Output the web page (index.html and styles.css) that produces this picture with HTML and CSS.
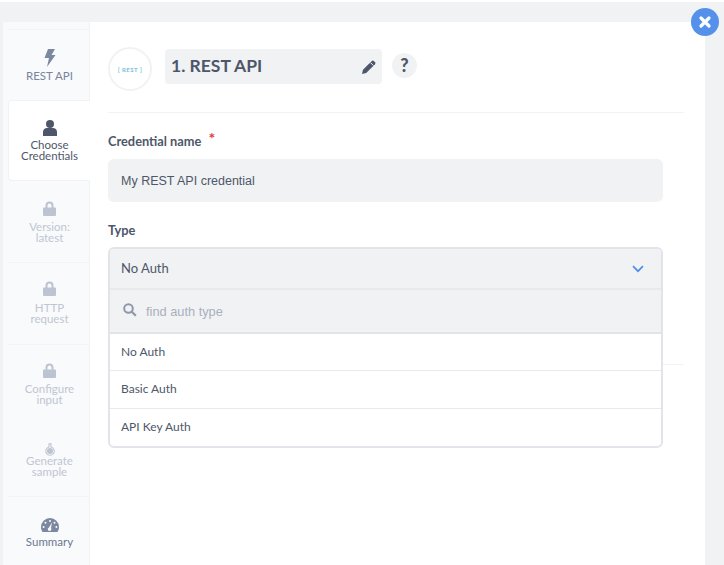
FILE: index.html
```html
<!DOCTYPE html>
<html lang="en">
<head>
    <meta charset="UTF-8">
    <title>REST API credential</title>
    <link rel="stylesheet" href="styles.css">
</head>
<body>

    <div class="modal">
        <div class="close">
            <svg width="14" height="14" viewBox="0 0 14 14"><path d="M3 3l8 8M11 3l-8 8" stroke="#fff" stroke-width="3.200" stroke-linecap="round"/></svg>
        </div>

        <div class="sidebar">
            <div class="step step-first">
                <svg class="step-icon" width="12" height="18" viewBox="0 0 12 18"><path class="dark" d="M4 0h7L7.500 6H11.500L3 18l2-9H0.500z"/></svg>
                <span>REST API</span>
            </div>
            <div class="step step-active">
                <svg class="step-icon" width="14" height="16" viewBox="0 0 14 16"><circle cx="7" cy="4" r="4" fill="#4d5769"/><path d="M0 16v-4c0-2.500 2-4 4-4h6c2 0 4 1.500 4 4v4z" fill="#4d5769"/></svg>
                <span>Choose<br>Credentials</span>
            </div>
            <div class="step step-locked step-version">
                <svg class="step-icon" width="13" height="15" viewBox="0 0 13 15"><path class="lock" d="M1 6.500h1.500V4.500a4 4 0 0 1 8 0v2H12a1 1 0 0 1 1 1V14a1 1 0 0 1-1 1H1a1 1 0 0 1-1-1V7.500a1 1 0 0 1 1-1zM4.500 6.500h4v-2a2 2 0 0 0-4 0z"/></svg>
                <span>Version:<br>latest</span>
            </div>
            <div class="step step-locked">
                <svg class="step-icon" width="13" height="15" viewBox="0 0 13 15"><path class="lock" d="M1 6.500h1.500V4.500a4 4 0 0 1 8 0v2H12a1 1 0 0 1 1 1V14a1 1 0 0 1-1 1H1a1 1 0 0 1-1-1V7.500a1 1 0 0 1 1-1zM4.500 6.500h4v-2a2 2 0 0 0-4 0z"/></svg>
                <span>HTTP<br>request</span>
            </div>
            <div class="step step-locked step-noline">
                <svg class="step-icon" width="13" height="15" viewBox="0 0 13 15"><path class="lock" d="M1 6.500h1.500V4.500a4 4 0 0 1 8 0v2H12a1 1 0 0 1 1 1V14a1 1 0 0 1-1 1H1a1 1 0 0 1-1-1V7.500a1 1 0 0 1 1-1zM4.500 6.500h4v-2a2 2 0 0 0-4 0z"/></svg>
                <span>Configure<br>input</span>
            </div>
            <div class="step step-locked step-sample">
                <svg class="step-icon" width="10" height="13" viewBox="0 0 10 13"><path d="M3.500 .7h3M4 .7v3.300a4.200 4.200 0 1 0 2 0V.7" fill="none" stroke="#bcc4d2" stroke-width="1.100"/><circle cx="5" cy="8" r="3" fill="#bcc4d2"/></svg>
                <span>Generate<br>sample</span>
            </div>
            <div class="step step-last">
                <svg class="step-icon" width="18" height="14" viewBox="0 0 18 14"><path class="dark" fill-rule="evenodd" d="M9 0a9 9 0 0 1 9 9c0 2-.6 3.500-1.500 5H1.500C.6 12.500 0 11 0 9a9 9 0 0 1 9-9zM9 2a1 1 0 1 0 0 2 1 1 0 0 0 0-2zM4.500 3.800a1 1 0 1 0 0 2 1 1 0 0 0 0-2zM13.500 3.800a1 1 0 1 0 0 2 1 1 0 0 0 0-2zM2.600 8a1 1 0 1 0 0 2 1 1 0 0 0 0-2zM15.400 8a1 1 0 1 0 0 2 1 1 0 0 0 0-2zM11 4.500L8 9.500a1.800 1.800 0 1 0 2 .6z"/></svg>
                <span>Summary</span>
            </div>
        </div>

        <div class="main">
            <div class="header">
                <div class="logo">
                    <span class="logo-text"><i>[</i> REST <i>]</i></span>
                </div>
                <div class="title">
                    <h2>1. REST API</h2>
                    <svg width="14" height="14" viewBox="0 0 14 14"><path d="M0 14l1-4.200L9.800 1a1.500 1.500 0 0 1 2 0L13 2.200a1.500 1.500 0 0 1 0 2L4.200 13z" fill="#4d5769"/><path d="M8.500 2.600l2.900 2.900" stroke="#f1f2f4" stroke-width="1"/></svg>
                </div>
                <div class="help">?</div>
            </div>

            <div class="form">
                <label class="label">Credential name <span class="req">*</span></label>
                <div class="input">My REST API credential</div>

                <label class="label label-type">Type</label>
                <div class="select-wrap">
                    <div class="dropdown">
                        <div class="selected">
                            <span>No Auth</span>
                            <svg width="12" height="8" viewBox="0 0 12 8"><path d="M1 1.200l5 5 5-5" fill="none" stroke="#4f8fe8" stroke-width="1.700"/></svg>
                        </div>
                        <div class="search">
                            <svg width="14" height="14" viewBox="0 0 14 14"><circle cx="5.500" cy="5.500" r="4.300" fill="none" stroke="#8f98a8" stroke-width="2"/><path d="M8.800 8.800l4 4" stroke="#8f98a8" stroke-width="2.200"/></svg>
                            <span>find auth type</span>
                        </div>
                        <div class="option">No Auth</div>
                        <div class="option">Basic Auth</div>
                        <div class="option">API Key Auth</div>
                    </div>
                </div>
            </div>
            <div class="form-line"></div>
        </div>
    </div>

</body>
</html>
```

FILE: styles.css
```css
html, body {
    height: 100%;
}
body {
    margin: 0;
    height: 565px;
    overflow: hidden;
    background-color: #fff;
    font-family: Lato, "Open Sans", sans-serif;
    color: #4d5769;
}
body::before {
    content: "";
    display: block;
    height: 2px;
}
.modal {
    position: relative;
    display: flex;
    height: 543px;
    margin-top: 20px;
    margin-left: 3px;
    margin-right: 19px;
    background-color: #fff;
    box-shadow: 0 0 0 30px #f1f2f4;
    clip-path: inset(-20px -19px 0 -3px);
}
.close {
    position: absolute;
    top: -14px;
    right: -14px;
    width: 28px;
    height: 28px;
    display: flex;
    align-items: center;
    justify-content: center;
    border-radius: 50%;
    background-color: #5591ea;
    z-index: 3;
}

/* steps on the left */
.sidebar {
    width: 87px;
    box-sizing: border-box;
    padding-left: 5px;
    background-color: #f9fafc;
    border-right: 1px solid #f1f2f5;
    flex-shrink: 0;
    padding-top: 7px;
}
.step {
    display: flex;
    flex-direction: column;
    align-items: center;
    height: 81px;
    box-sizing: border-box;
    border-bottom: 1px solid #f2f3f6;
    font-size: 11.500px;
    line-height: 11px;
    text-align: center;
    color: #bfc6d3;
    padding-top: 18px;
    padding-left: 2px;
}
.step-icon {
    margin-bottom: 6px;
}
.dark {
    fill: #7c88a0;
}
.lock {
    fill: #bcc4d2;
    fill-rule: evenodd;
}
.step-first {
    height: 71px;
    border-top: 1px solid #f2f3f6;
    border-bottom: none;
    color: #78849b;
    padding-top: 19px;
}
.step-first .step-icon,
.step-active .step-icon {
    margin-bottom: 3px;
}
.step-active {
    height: 81px;
    margin-right: -1px;
    background-color: #fff;
    border: 1px solid #f1f2f5;
    border-right: none;
    border-radius: 4px 0 0 4px;
    color: #4d5769;
    padding-top: 19px;
    padding-left: 0;
}
.step-locked {
    height: 82px;
}
.step-version {
    padding-top: 20px;
}
.step-version .step-icon {
    margin-bottom: 5px;
}
.step-noline {
    height: 71px;
    border-bottom: none;
}
.step-noline .step-icon {
    margin-bottom: 5px;
}
.step-sample {
    height: 81px;
    padding-top: 27px;
}
.step-sample .step-icon {
    margin-bottom: -1px;
}
.step-last {
    height: 68px;
    border-bottom: none;
    color: #6b7890;
    padding-top: 21px;
}
.step-last .step-icon {
    margin-bottom: 4px;
}

/* main panel */
.main {
    flex: 1;
    padding: 25px 21px 0 18px;
}
.header {
    display: flex;
    align-items: flex-start;
    height: 44px;
    padding-bottom: 21px;
    border-bottom: 1px solid #f1f2f4;
}
.logo {
    width: 44px;
    height: 44px;
    box-sizing: border-box;
    border: 2px solid #f1f2f4;
    border-radius: 50%;
    display: flex;
    align-items: center;
    justify-content: center;
    margin-right: 13px;
}
.logo-text {
    font-size: 6px;
    font-weight: 700;
    letter-spacing: 0.5px;
    color: #7cc0da;
}
.logo-text i {
    font-style: normal;
    color: #6fcfc5;
}
.title {
    width: 217px;
    height: 35px;
    margin-top: 2px;
    box-sizing: border-box;
    padding: 0 6px;
    display: flex;
    align-items: center;
    justify-content: space-between;
    border-radius: 4px;
    background-color: #f1f2f4;
    margin-right: 10px;
}
.title h2 {
    margin: 0 0 2px;
    font-size: 17.500px;
    font-weight: 700;
    color: #4d5769;
}
.help {
    width: 25px;
    height: 25px;
    margin-top: 6px;
    border-radius: 50%;
    background-color: #f1f2f4;
    text-align: center;
    font-size: 18px;
    font-weight: 900;
    line-height: 25px;
}
.form {
    width: 555px;
    padding-top: 19px;
}
.label {
    display: block;
    font-size: 12.800px;
    font-weight: 700;
    line-height: 18px;
    margin-bottom: 9px;
}
.req {
    color: #e8383d;
    font-size: 16px;
    line-height: 10px;
    position: relative;
    top: -2px;
    margin-left: 4px;
}
.input {
    height: 43px;
    box-sizing: border-box;
    padding-left: 13px;
    border-radius: 6px;
    background-color: #f1f2f4;
    font-family: "Liberation Sans", Arial, sans-serif;
    font-size: 12.500px;
    line-height: 44px;
}
.label-type {
    margin-top: 19px;
    margin-bottom: 8px;
}
.select-wrap {
    position: relative;
    height: 117px;
}
.dropdown {
    position: absolute;
    top: 0;
    left: 0;
    right: 0;
    z-index: 2;
    box-sizing: border-box;
    border: 2px solid #e2e4e9;
    border-radius: 6px;
    background-color: #fff;
    overflow: hidden;
}
.selected {
    height: 39px;
    display: flex;
    align-items: center;
    justify-content: space-between;
    padding: 0 17px 0 11px;
    background-color: #f1f2f4;
    border-bottom: 2px solid #e8e9ed;
    font-size: 13px;
}
.selected span {
    margin-bottom: 2px;
}
.search {
    height: 42px;
    display: flex;
    align-items: center;
    padding-left: 13px;
    background-color: #f1f2f4;
    border-bottom: 2px solid #e2e4e9;
    font-family: "Liberation Sans", Arial, sans-serif;
    font-size: 12.800px;
    color: #a8b0bd;
}
.search svg {
    margin-bottom: 3px;
}
.search span {
    margin-left: 9px;
}
.option {
    height: 37px;
    box-sizing: border-box;
    padding-left: 11px;
    border-bottom: 1px solid #e8e9ed;
    font-size: 12px;
    line-height: 36px;
}
.option:nth-child(4) {
    height: 38px;
}
.option:last-child {
    border-bottom: none;
}
.form-line {
    height: 1px;
    background-color: #f1f2f4;
}
```
